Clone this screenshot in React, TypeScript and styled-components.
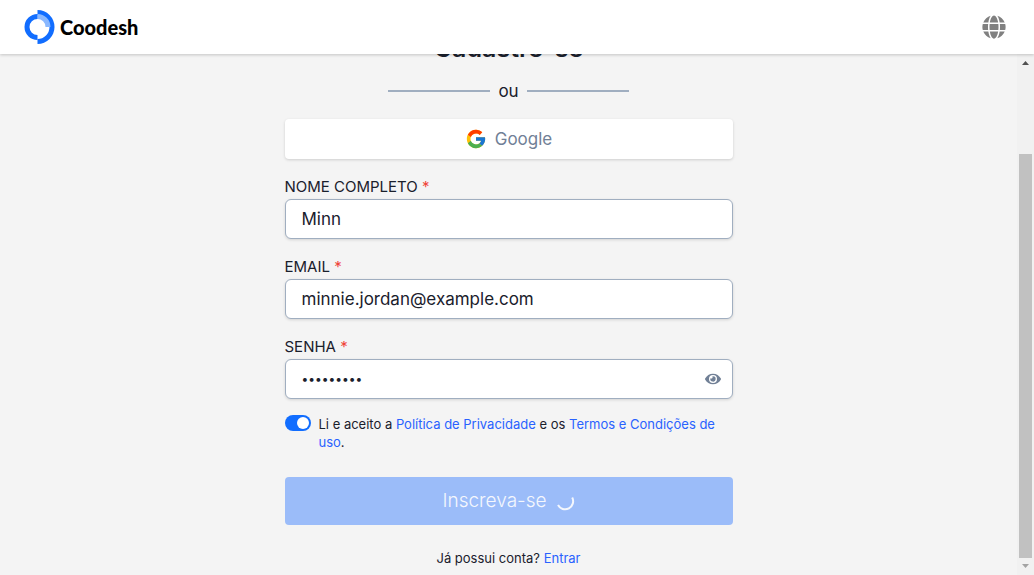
import React, { useState } from "react";
import styled, { createGlobalStyle } from "styled-components";
import { FaEye, FaGlobe } from "react-icons/fa";
import { FcGoogle } from "react-icons/fc";

const GlobalStyle = createGlobalStyle`
  *, *::before, *::after { box-sizing: border-box; }
  body {
    margin: 0;
    background: #f4f4f4;
    color: #1a202c;
    font-family: Inter, "Noto Sans", sans-serif;
    font-size: 17px;
    line-height: 24px;
  }
  button, input { font: inherit; color: inherit; }
`;

const Page = styled.div`
  display: flex;
  flex-direction: column;
  height: 100vh;
`;

const Header = styled.header`
  position: relative;
  z-index: 1;
  flex: none;
  display: flex;
  align-items: center;
  justify-content: space-between;
  height: 54px;
  padding: 0 28px 0 24px;
  background: #fff;
  box-shadow: 0 1px 3px rgba(0, 0, 0, 0.2);
`;

const Brand = styled.a`
  display: flex;
  align-items: center;
  gap: 5px;
  color: #000;
  font-family: Lato, sans-serif;
  font-size: 20px;
  font-weight: 900;
  text-decoration: none;
`;

const IconButton = styled.button<{ $color: string }>`
  display: flex;
  padding: 0;
  border: 0;
  background: none;
  color: ${(p) => p.$color};
  cursor: pointer;
`;

const Body = styled.div`
  flex: 1;
  min-height: 0;
  display: flex;
`;

const Main = styled.main`
  flex: 1;
  display: flex;
  flex-direction: column;
  justify-content: flex-end;
  align-items: center;
  padding: 0 16px 8px;
  overflow: hidden;
`;

const Form = styled.form`
  flex: none;
  display: flex;
  flex-direction: column;
  width: 100%;
  max-width: 448px;
`;

const Title = styled.h1`
  margin: 0 0 15px;
  font-size: 25px;
  font-weight: 600;
  line-height: 32px;
  text-align: center;
`;

const Divider = styled.div`
  display: flex;
  align-items: center;
  justify-content: center;
  gap: 8px;
  margin-bottom: 16px;

  &::before, &::after {
    content: "";
    width: 102px;
    height: 2px;
    background: #a0aec0;
  }
`;

const GoogleButton = styled.button`
  display: flex;
  align-items: center;
  justify-content: center;
  gap: 8px;
  height: 40px;
  margin-bottom: 16px;
  border: 0;
  border-radius: 4px;
  background: #fff;
  color: #718096;
  box-shadow: 0 1px 3px rgba(0, 0, 0, 0.16);
`;

const Field = styled.div`
  margin-bottom: 16px;
`;

const Label = styled.label`
  display: block;
  font-size: 15px;
  text-transform: uppercase;
`;

const Required = styled.span`
  color: #f04438;
`;

const InputBox = styled.div`
  display: flex;
  align-items: center;
  height: 40px;
  padding: 0 11px 0 16px;
  border: 1px solid #a0aec0;
  border-radius: 6px;
  background: #fff;
  box-shadow: 0 1px 3px rgba(0, 0, 0, 0.14);
`;

const Input = styled.input`
  flex: 1;
  min-width: 0;
  padding: 0;
  border: 0;
  outline: 0;
  background: none;

  &[type="password"] { font-size: 12px; }
`;

const Terms = styled.div`
  display: flex;
  gap: 8px;
  margin-bottom: 26px;
  padding-right: 12px;
  font-size: 13px;
  line-height: 18px;
`;

const Switch = styled.input`
  appearance: none;
  flex: none;
  display: flex;
  align-items: center;
  width: 26px;
  height: 16px;
  margin: 0;
  padding: 0 2px;
  border-radius: 8px;
  background: #a0aec0;

  &::before {
    content: "";
    width: 12px;
    height: 12px;
    border-radius: 50%;
    background: #fff;
  }
  &:checked {
    justify-content: flex-end;
    background: #116dff;
  }
`;

const Link = styled.a`
  color: #2962ff;
  text-decoration: none;
`;

const SubmitButton = styled.button`
  display: flex;
  align-items: center;
  justify-content: center;
  gap: 8px;
  height: 48px;
  margin-bottom: 24px;
  border: 0;
  border-radius: 4px;
  background: #9bbcf9;
  color: #f4f7fd;
  font-size: 19px;
  font-weight: 300;
`;

const SignIn = styled.p`
  margin: 0;
  font-size: 13px;
  line-height: 18px;
  text-align: center;
`;

const Scrollbar = styled.div`
  flex: none;
  display: flex;
  flex-direction: column;
  align-items: center;
  width: 17px;
  background: #f1f1f1;
`;

const Arrow = styled.svg`
  flex: none;
  width: 17px;
  height: 17px;
`;

const Track = styled.div`
  flex: 1;
  display: flex;
  flex-direction: column;
  justify-content: flex-end;
  width: 13px;
`;

const Thumb = styled.div`
  height: 83%;
  background: #c1c1c1;
`;

function Logo() {
  return (
    <svg width="31" height="34" viewBox="0 0 31 34" aria-hidden="true">
      <path d="M13.5 0a17 17 0 0 1 0 34v-5a12 12 0 0 0 0-24z" fill="#116dff" />
      <path d="M13.5 4a13 13 0 0 1 13 13h-5a8 8 0 0 0-8-8z" fill="#8ab8ff" />
      <path d="M13.5 4a13 13 0 0 0 0 26v-5a8 8 0 0 1 0-16z" fill="#116dff" />
    </svg>
  );
}

function Spinner() {
  return (
    <svg width="20" height="20" viewBox="0 0 20 20" fill="none" stroke="#f4f7fd" strokeWidth="2" aria-hidden="true">
      <path d="M17.2 6.5A8 8 0 0 1 3 14" />
    </svg>
  );
}

type TextFieldProps = {
  id: string;
  label: string;
  type: string;
  initial: string;
  children?: React.ReactNode;
};

function TextField({ id, label, type, initial, children }: TextFieldProps) {
  const [value, setValue] = useState(initial);
  return (
    <Field>
      <Label htmlFor={id}>
        {label} <Required>*</Required>
      </Label>
      <InputBox>
        <Input id={id} type={type} value={value} onChange={(e) => setValue(e.target.value)} />
        {children}
      </InputBox>
    </Field>
  );
}

export default function App() {
  return (
    <Page>
      <GlobalStyle />
      <Header>
        <Brand href="#">
          <Logo />
          Coodesh
        </Brand>
        <IconButton type="button" aria-label="Idioma" $color="#808080">
          <FaGlobe size={24} />
        </IconButton>
      </Header>
      <Body>
        <Main>
          <Form>
            <Title>Cadastre-se</Title>
            <Divider>ou</Divider>
            <GoogleButton type="button">
              <FcGoogle size={22} />
              Google
            </GoogleButton>
            <TextField id="name" label="Nome completo" type="text" initial="Minn" />
            <TextField id="email" label="Email" type="email" initial="minnie.jordan@example.com" />
            <TextField id="password" label="Senha" type="password" initial="minnie123">
              <IconButton type="button" aria-label="Mostrar senha" $color="#718096">
                <FaEye size={16} />
              </IconButton>
            </TextField>
            <Terms>
              <Switch id="terms" type="checkbox" role="switch" defaultChecked />
              <label htmlFor="terms">
                Li e aceito a <Link href="#">Política de Privacidade</Link> e os{" "}
                <Link href="#">Termos e Condições de uso</Link>.
              </label>
            </Terms>
            <SubmitButton type="submit">
              Inscreva-se
              <Spinner />
            </SubmitButton>
            <SignIn>
              Já possui conta? <Link href="#">Entrar</Link>
            </SignIn>
          </Form>
        </Main>
        <Scrollbar aria-hidden="true">
          <Arrow viewBox="0 0 17 17">
            <path d="M5 11h7L8.5 7z" fill="#505050" />
          </Arrow>
          <Track>
            <Thumb />
          </Track>
          <Arrow viewBox="0 0 17 17">
            <path d="M5 6h7l-3.5 4z" fill="#a3a3a3" />
          </Arrow>
        </Scrollbar>
      </Body>
    </Page>
  );
}
